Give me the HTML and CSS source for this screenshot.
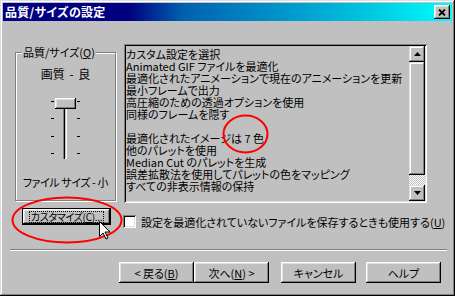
FILE: index.html
```html
<!DOCTYPE html>
<html lang="ja">

<head>
    <meta charset="UTF-8">
    <meta name="viewport" content="width=device-width, initial-scale=1.0">
    <title>品質/サイズの設定</title>
    <link rel="stylesheet" href="styles.css">
</head>

<body>
    <div class="window">
        <div class="titlebar">
            <span class="title">品質/サイズの設定</span>
            <div class="close-button">
                <svg width="8" height="7" viewBox="0 0 8 7"><path d="M1 0.5l6 6M7 0.5l-6 6" stroke="#000" stroke-width="1.8"/></svg>
            </div>
        </div>

        <div class="client">
            <div class="main-row">
                <!-- quality / size group -->
                <div class="group">
                    <span class="group-label">品質/サイズ(<u>Q</u>)</span>
                    <div class="group-text quality-text">画質 - 良</div>
                    <div class="slider">
                        <div class="ticks">
                            <span></span><span></span><span></span><span></span>
                        </div>
                        <div class="track"></div>
                        <div class="ticks">
                            <span></span><span></span><span></span><span></span>
                        </div>
                        <div class="thumb"></div>
                    </div>
                    <div class="group-text size-text">ファイル サイズ - 小</div>
                </div>

                <!-- settings list -->
                <div class="listbox">
                    <div class="list-lines">
                        <div>カスタム設定を選択</div>
                        <div>Animated GIF ファイルを最適化</div>
                        <div>最適化されたアニメーションで現在のアニメーションを更新</div>
                        <div>最小フレームで出力</div>
                        <div>高圧縮のための透過オプションを使用</div>
                        <div>同様のフレームを隠す</div>
                        <div>&nbsp;</div>
                        <div>最適化されたイメージは 7 色</div>
                        <div>他のパレットを使用</div>
                        <div>Median Cut のパレットを生成</div>
                        <div>誤差拡散法を使用してパレットの色をマッピング</div>
                        <div>すべての非表示情報の保持</div>
                    </div>
                    <div class="scrollbar">
                        <div class="scroll-btn">
                            <svg width="7" height="4" viewBox="0 0 7 4"><path d="M3.5 0L7 4H0z" fill="#000"/></svg>
                        </div>
                        <div class="scroll-thumb"></div>
                        <div class="scroll-track"></div>
                        <div class="scroll-btn">
                            <svg width="7" height="4" viewBox="0 0 7 4"><path d="M0 0h7L3.5 4z" fill="#000"/></svg>
                        </div>
                    </div>
                </div>
            </div>

            <div class="options-row">
                <div class="button custom-button"><span class="focus">カスタマイズ(<u>C</u>)...</span></div>
                <div class="checkbox">
                    <span class="check-box"></span>
                    <span>設定を最適化されていないファイルを保存するときも使用する(<u>U</u>)</span>
                </div>
            </div>

            <div class="separator"></div>

            <div class="actions">
                <div class="button">&lt; 戻る(<u>B</u>)</div>
                <div class="button">次へ(<u>N</u>) &gt;</div>
                <div class="button gap-left">キャンセル</div>
                <div class="button gap-small">ヘルプ</div>
            </div>
        </div>

        <!-- red annotation marks -->
        <svg class="mark mark-colors" width="47" height="40" viewBox="0 0 47 40">
            <ellipse cx="23.5" cy="20" rx="22" ry="18.5" fill="none" stroke="#f00" stroke-width="2"/>
        </svg>
        <svg class="mark mark-custom" width="112" height="48" viewBox="0 0 112 48">
            <ellipse cx="56" cy="24" rx="54.5" ry="22.5" fill="none" stroke="#f00" stroke-width="2"/>
        </svg>
        <svg class="mark cursor" width="12" height="19" viewBox="0 0 12 19">
            <path d="M0.5 0.5v15l3.5-3.5 3 6 2-1-3-6h5z" fill="#fff" stroke="#000" stroke-width="1"/>
        </svg>
    </div>
</body>

</html>
```

FILE: styles.css
```css
:root {
    --face: #c0c0c0;
    --shadow: #808080;
    --dark: #000;
    --light: #dfdfdf;
    --hilite: #fff;
}

* {
    margin: 0;
    padding: 0;
    box-sizing: border-box;
}

body {
    width: 455px;
    height: 296px;
    overflow: hidden;
    font-family: "Noto Sans CJK JP", "Liberation Sans", sans-serif;
    font-size: 11px;
    line-height: 12px;
    font-feature-settings: "palt";
    color: #000;
}

u {
    text-decoration: underline;
    text-underline-offset: 1px;
}

.window {
    position: relative;
    width: 455px;
    height: 296px;
    padding: 3px;
    background: var(--face);
    box-shadow: inset -1px -1px 0 var(--dark), inset 1px 1px 0 var(--light),
        inset -2px -2px 0 var(--shadow), inset 2px 2px 0 var(--hilite);
}

/* Title bar */
.titlebar {
    height: 18px;
    display: flex;
    align-items: center;
    justify-content: space-between;
    padding: 0 2px 0 2px;
    background: linear-gradient(to right, #000080 0%, #000080 28%, #0060b0 40%, #0090c8 60%, #00c8e0 82%, #00ffff 100%);
}

.title {
    color: #fff;
    font-weight: 700;
    font-size: 12px;
    letter-spacing: 0.3px;
}

.close-button {
    width: 16px;
    height: 14px;
    display: flex;
    align-items: center;
    justify-content: center;
    background: var(--face);
    box-shadow: inset -1px -1px 0 var(--dark), inset 1px 1px 0 var(--hilite),
        inset -2px -2px 0 var(--shadow), inset 2px 2px 0 var(--light);
}

/* Client area */
.client {
    padding: 23px 0 0 12px;
}

.main-row {
    display: flex;
    align-items: flex-start;
    gap: 8px;
}

.group {
    position: relative;
    width: 101px;
    height: 149px;
    margin-top: 8px;
    padding-top: 15px;
    border: 1px solid var(--shadow);
    box-shadow: 1px 1px 0 var(--hilite), inset 1px 1px 0 var(--hilite);
}

.group-label {
    position: absolute;
    top: -7px;
    left: 6px;
    padding: 0 1px;
    background: var(--face);
}

.group-text {
    text-align: center;
}

.quality-text {
    font-size: 12px;
    word-spacing: 2px;
}

.slider {
    position: relative;
    width: 30px;
    height: 62px;
    margin: 17px auto 0;
    display: flex;
}

.ticks {
    width: 3px;
    height: 100%;
    padding: 4px 0 5px;
    display: flex;
    flex-direction: column;
    justify-content: space-between;
}

.ticks span {
    display: block;
    height: 1px;
    background: #000;
}

.track {
    width: 4px;
    height: 61px;
    margin: 1px 10px 0 9px;
    box-shadow: inset 1px 1px 0 var(--shadow), inset 2px 2px 0 var(--dark),
        inset -1px -1px 0 var(--hilite);
}

.thumb {
    position: absolute;
    top: 1px;
    left: 4px;
    width: 21px;
    height: 11px;
    background: var(--face);
    box-shadow: inset -1px -1px 0 var(--dark), inset 1px 1px 0 var(--hilite),
        inset -2px -2px 0 var(--shadow), inset 2px 2px 0 var(--light);
}

.size-text {
    margin-top: 17px;
    letter-spacing: -0.4px;
}

/* List box */
.listbox {
    width: 303px;
    height: 159px;
    padding: 2px;
    display: flex;
    box-shadow: inset 1px 1px 0 var(--shadow), inset -1px -1px 0 var(--hilite),
        inset 2px 2px 0 var(--dark), inset -2px -2px 0 var(--light);
}

.list-lines {
    flex: 1;
    padding-top: 2px;
    white-space: nowrap;
    overflow: hidden;
}

.scrollbar {
    width: 16px;
    display: flex;
    flex-direction: column;
}

.scroll-btn {
    height: 16px;
    display: flex;
    align-items: center;
    justify-content: center;
    background: var(--face);
    box-shadow: inset -1px -1px 0 var(--dark), inset 1px 1px 0 var(--light),
        inset -2px -2px 0 var(--shadow), inset 2px 2px 0 var(--hilite);
}

.scroll-thumb {
    height: 113px;
    background: var(--face);
    box-shadow: inset -1px -1px 0 var(--dark), inset 1px 1px 0 var(--light),
        inset -2px -2px 0 var(--shadow), inset 2px 2px 0 var(--hilite);
}

.scroll-track {
    flex: 1;
    background: repeating-conic-gradient(#fff 0 25%, var(--face) 0 50%) 0 0 / 2px 2px;
}

/* Options row */
.options-row {
    display: flex;
    align-items: flex-start;
    margin-top: 6px;
}

.button {
    width: 75px;
    height: 21px;
    display: flex;
    align-items: center;
    justify-content: center;
    background: var(--face);
    box-shadow: inset -1px -1px 0 var(--dark), inset 1px 1px 0 var(--hilite),
        inset -2px -2px 0 var(--shadow), inset 2px 2px 0 var(--light);
}

.custom-button {
    width: 87px;
    height: 15px;
    margin-left: 8px;
    box-shadow: 0 0 0 1px var(--dark), inset -1px -1px 0 var(--dark), inset 1px 1px 0 var(--hilite),
        inset -2px -2px 0 var(--shadow), inset 2px 2px 0 var(--light);
}

.focus {
    padding: 0 1px;
    font-size: 10px;
    line-height: 10px;
    letter-spacing: -0.3px;
    white-space: nowrap;
    outline: 1px dotted #000;
    outline-offset: 0;
}

.checkbox {
    display: flex;
    align-items: center;
    gap: 5px;
    margin: 6px 0 0 13px;
}

.check-box {
    width: 13px;
    height: 13px;
    background: #fff;
    box-shadow: inset 1px 1px 0 var(--shadow), inset -1px -1px 0 var(--hilite),
        inset 2px 2px 0 var(--dark), inset -2px -2px 0 var(--light);
}

.separator {
    width: 437px;
    height: 2px;
    margin: 21px 0 0 -5px;
    border-top: 1px solid var(--shadow);
    border-bottom: 1px solid var(--hilite);
}

.actions {
    display: flex;
    margin: 11px 0 0 104px;
}

.gap-left {
    margin-left: 12px;
}

.gap-small {
    margin-left: 10px;
}

/* Annotation overlay */
.mark {
    position: absolute;
}

.mark-colors {
    left: 222px;
    top: 114px;
}

.mark-custom {
    left: 11px;
    top: 196px;
}

.cursor {
    left: 99px;
    top: 221px;
}
```
